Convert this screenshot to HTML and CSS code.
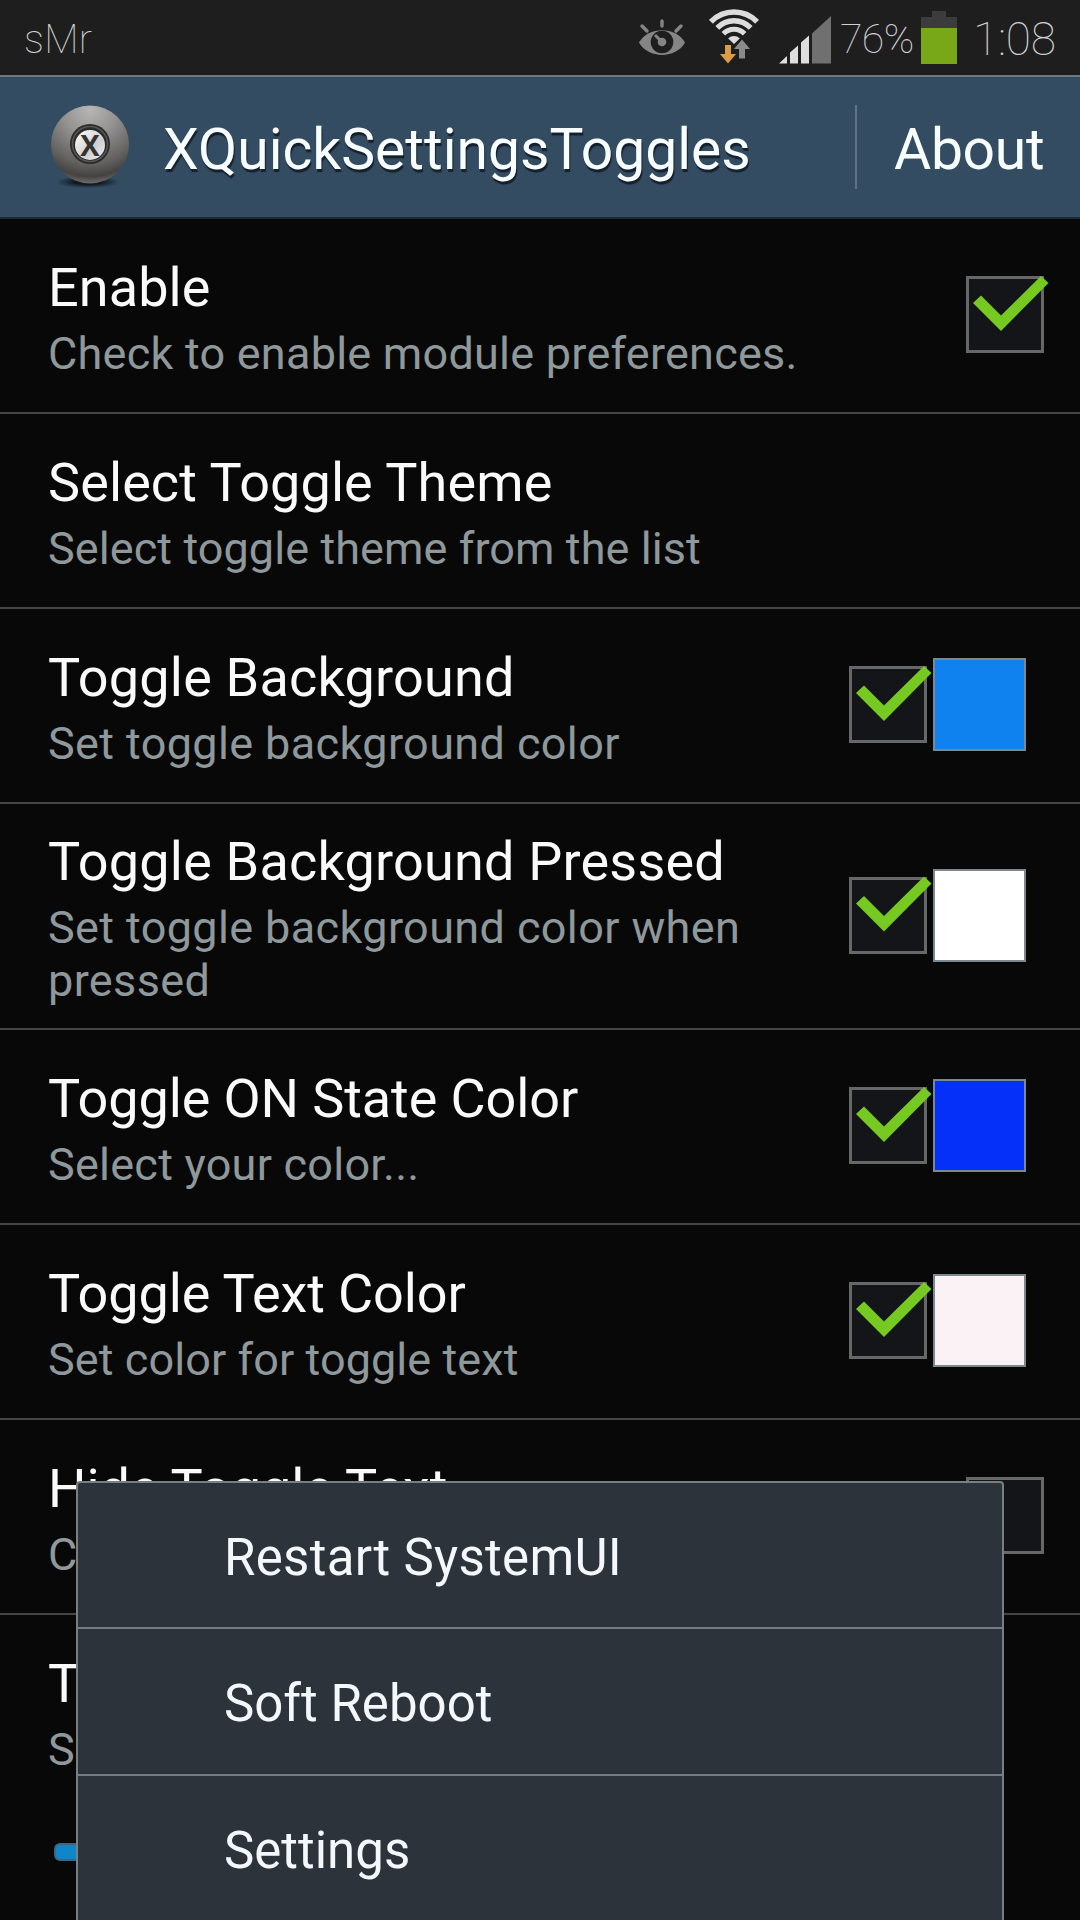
FILE: index.html
```
<!DOCTYPE html>
<html lang="en">
<head>
    <meta charset="UTF-8">
    <meta name="viewport" content="width=device-width, initial-scale=1.0">
    <title>XQuickSettingsToggles</title>
    <link rel="stylesheet" href="styles.css">
</head>
<body>

    <div class="status-bar">
        <span class="carrier">sMr</span>
        <svg class="icon-eye" width="46" height="38" viewBox="0 0 46 38">
            <g stroke="#858585" stroke-width="3.4" stroke-linecap="round" fill="none">
                <path d="M23 3v5M3 8l5 5M42 8l-5 5"/>
            </g>
            <path d="M0 24.500C9 8 37 8 46 24.500C37 41 9 41 0 24.500Z" fill="#858585"/>
            <circle cx="23" cy="24" r="11.3" fill="#1e1e1e"/>
            <circle cx="23" cy="24" r="4.3" fill="#858585"/>
            <path d="M16 17l7 7" stroke="#858585" stroke-width="3"/>
        </svg>
        <svg class="icon-wifi" width="54" height="56" viewBox="0 0 54 56">
            <defs>
                <clipPath id="fan">
                    <path d="M26 35L-1 9V0H53V9Z"/>
                </clipPath>
            </defs>
            <g clip-path="url(#fan)" fill="none" stroke="#dcdcdc">
                <circle cx="26" cy="35" r="32" stroke-width="5.6"/>
                <circle cx="26" cy="35" r="23.2" stroke-width="5.4"/>
                <circle cx="26" cy="35" r="14.7" stroke-width="5"/>
                <circle cx="26" cy="35" r="8" stroke="none" fill="#dcdcdc"/>
            </g>
            <path d="M17 36h6v9h5l-8 9.500-8-9.500h5z" fill="#dc9c48"/>
            <path d="M31 49.500v-9.500h-5l8-9.500 8 9.500h-5v9.500z" fill="#8a8a8a"/>
        </svg>
        <svg class="icon-signal" width="53" height="48" viewBox="0 0 53 48">
            <path d="M0 47.500l8-7.500v7.500zM11 47.500v-11l8-7v18zM22 47.500v-21l8-7v28z" fill="#dedede"/>
            <path d="M33 47.500v-30l19-17.500v47.500z" fill="#707070"/>
        </svg>
        <span class="percent">76%</span>
        <div class="battery"></div>
        <span class="clock">1:08</span>
    </div>

    <div class="action-bar">
        <svg class="app-icon" width="80" height="84" viewBox="0 0 80 84">
            <defs>
                <radialGradient id="ball" cx="0.5" cy="0.05" r="1">
                    <stop offset="0" stop-color="#b8b6b4"/>
                    <stop offset="0.35" stop-color="#949290"/>
                    <stop offset="0.7" stop-color="#63615f"/>
                    <stop offset="0.86" stop-color="#454342"/>
                    <stop offset="1" stop-color="#858381"/>
                </radialGradient>
                <radialGradient id="shade">
                    <stop offset="0.4" stop-color="#101820"/>
                    <stop offset="1" stop-color="#101820" stop-opacity="0"/>
                </radialGradient>
                <linearGradient id="face" x1="0" y1="0" x2="1" y2="1">
                    <stop offset="0" stop-color="#ffffff"/>
                    <stop offset="0.6" stop-color="#cfcfcf"/>
                    <stop offset="1" stop-color="#f2f2f2"/>
                </linearGradient>
            </defs>
            <ellipse cx="37" cy="77" rx="32" ry="6" fill="url(#shade)"/>
            <circle cx="39" cy="39.500" r="39" fill="url(#ball)"/>
            <circle cx="39" cy="39" r="20" fill="#2b2b2b"/>
            <circle cx="39" cy="39" r="17.500" fill="none" stroke="#555" stroke-width="1.500"/>
            <circle cx="39" cy="40" r="15" fill="url(#face)"/>
            <text x="39" y="50.500" text-anchor="middle" class="app-letter">X</text>
        </svg>
        <h1>XQuickSettingsToggles</h1>
        <div class="about">About</div>
    </div>

    <div class="list">
        <div class="row">
            <div class="text">
                <h2>Enable</h2>
                <p>Check to enable module preferences.</p>
            </div>
            <div class="checkbox checked"></div>
        </div>
        <div class="row">
            <div class="text">
                <h2>Select Toggle Theme</h2>
                <p class="tight">Select toggle theme from the list</p>
            </div>
        </div>
        <div class="row with-color">
            <div class="text loose">
                <h2>Toggle Background</h2>
                <p>Set toggle background color</p>
            </div>
            <div class="checkbox checked"></div>
            <div class="swatch blue"></div>
        </div>
        <div class="row with-color tall">
            <div class="text loose">
                <h2>Toggle Background Pressed</h2>
                <p>Set toggle background color when pressed</p>
            </div>
            <div class="checkbox checked"></div>
            <div class="swatch white"></div>
        </div>
        <div class="row with-color">
            <div class="text">
                <h2 class="tight">Toggle ON State Color</h2>
                <p>Select your color...</p>
            </div>
            <div class="checkbox checked"></div>
            <div class="swatch deep-blue"></div>
        </div>
        <div class="row with-color">
            <div class="text">
                <h2 class="tight">Toggle Text Color</h2>
                <p class="tight">Set color for toggle text</p>
            </div>
            <div class="checkbox checked"></div>
            <div class="swatch pale"></div>
        </div>
        <div class="row">
            <div class="text">
                <h2 class="tight">Hide Toggle Text</h2>
                <p>C</p>
            </div>
            <div class="checkbox"></div>
        </div>
        <div class="row slider-row">
            <div class="text">
                <h2>T</h2>
                <p>S</p>
                <div class="slider"></div>
            </div>
        </div>
    </div>

    <div class="menu">
        <div class="menu-item">Restart SystemUI</div>
        <div class="menu-item">Soft Reboot</div>
        <div class="menu-item">Settings</div>
    </div>

</body>
</html>
```
FILE: styles.css
```
* {
    margin: 0;
    padding: 0;
    box-sizing: border-box;
}

body {
    font-family: Roboto, sans-serif;
    background: #080808;
    color: #fafafa;
    width: 1080px;
    height: 1920px;
    position: relative;
    overflow: hidden;
}

h1, h2 {
    font-weight: 400;
}

/* Status bar */
.status-bar {
    display: flex;
    align-items: flex-start;
    height: 75px;
    background: #1e1e1e;
    color: #d0d0d0;
    font-weight: 100;
    white-space: nowrap;
}

.carrier {
    width: 615px;
    margin-left: 24px;
    font-size: 40px;
    line-height: 79px;
    letter-spacing: 0.3px;
}

.icon-eye {
    margin-top: 18px;
}

.icon-wifi {
    margin: 9px 0 0 23px;
}

.icon-signal {
    margin: 16px 0 0 17px;
}

.percent {
    width: 80px;
    margin-left: 8px;
    font-size: 41px;
    line-height: 79px;
    letter-spacing: -0.6px;
}

.battery {
    position: relative;
    width: 36px;
    height: 47px;
    margin: 17px 0 0 1px;
    background: linear-gradient(#3c3c3c 11px, #78a818 11px);
}

.battery::before {
    content: "";
    position: absolute;
    left: 11px;
    top: -6px;
    width: 14px;
    height: 6px;
    background: #3c3c3c;
}

.clock {
    margin-left: 16px;
    font-size: 46px;
    line-height: 78px;
    letter-spacing: -0.3px;
}

/* Action bar */
.action-bar {
    display: flex;
    align-items: center;
    height: 144px;
    padding-left: 51px;
    background: #344c62;
    border-top: 2px solid #6b7983;
    border-bottom: 2px solid #1b2a38;
}

.app-icon {
    margin-top: -1px;
}

.app-letter {
    font-family: "Open Sans", sans-serif;
    font-size: 29px;
    font-weight: 700;
    fill: #333;
}

h1 {
    flex: 1;
    margin-left: 32px;
    padding-top: 5px;
    font-size: 57px;
    color: #f8fdff;
    text-shadow: 1px 3px 1px #14202b;
}

.about {
    width: 225px;
    height: 84px;
    padding-left: 37px;
    border-left: 2px solid #5f7587;
    font-size: 57px;
    line-height: 90px;
    letter-spacing: -0.3px;
    color: #f8fdff;
}

/* Preference list */
.row {
    display: flex;
    align-items: center;
    height: 195px;
    padding: 0 36px 0 48px;
    border-bottom: 2px solid #454545;
}

.row.with-color {
    padding-right: 54px;
}

.row.tall {
    height: 226px;
}

.text {
    flex: 1;
    padding-top: 5px;
}

.text h2 {
    font-size: 54px;
    line-height: 63px;
    letter-spacing: 0.1px;
}

.text p {
    margin-top: 8px;
    font-size: 45px;
    line-height: 53px;
    letter-spacing: 0.24px;
    color: #8f989b;
}

.loose h2 {
    letter-spacing: 0.2px;
}

.loose p {
    letter-spacing: 0.38px;
}

.text .tight {
    letter-spacing: 0.08px;
}

.text h2.tight {
    letter-spacing: -0.1px;
}

.checkbox {
    position: relative;
    width: 78px;
    height: 77px;
    margin-top: -2px;
    background: #131518;
    border: 3px solid #676767;
}

.checkbox.checked::before {
    content: "";
    position: absolute;
    left: 4px;
    top: -3px;
    width: 76px;
    height: 55px;
    background: #76c920;
    clip-path: polygon(0 27px, 8px 19.5px, 28px 39.5px, 68px 0, 75.500px 7px, 28px 55px);
}

.swatch {
    width: 93px;
    height: 93px;
    margin: -2px 0 0 6px;
    border: 2px solid #7c8790;
}

.blue { background: #0f82f0; }
.white { background: #ffffff; }
.deep-blue { background: #0530fa; }
.pale { background: #faf2f4; }

.slider-row {
    height: 320px;
    align-items: flex-start;
    padding-top: 32px;
}

.slider {
    width: 900px;
    height: 18px;
    margin: 67px 0 0 6px;
    background: #0e86c8;
    border: 2px solid #3d6580;
    border-radius: 6px;
}

/* Options menu over the list */
.menu {
    position: absolute;
    left: 76px;
    top: 1481px;
    width: 928px;
    height: 460px;
    background: #2c333a;
    border: 2px solid #778182;
    border-radius: 4px;
}

.menu-item {
    height: 147px;
    padding-left: 146px;
    border-bottom: 2px solid #757a83;
    font-size: 51px;
    line-height: 149px;
    color: #f4f8fc;
}

.menu-item:first-child {
    height: 146px;
    letter-spacing: 0.3px;
}
```
